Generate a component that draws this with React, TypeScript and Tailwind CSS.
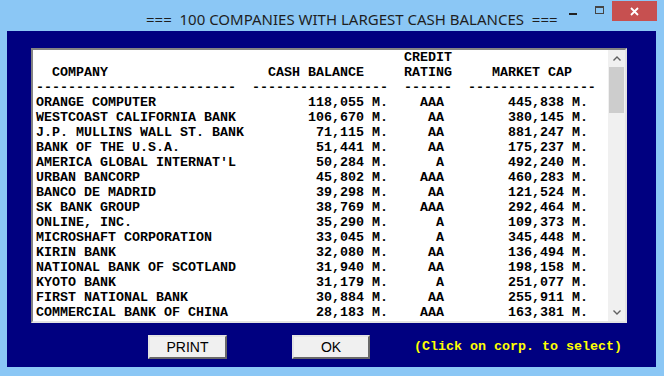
import React from 'react';

interface Company {
  name: string;
  cash: string;
  rating: string;
  cap: string;
}

const companies: Company[] = [
  { name: 'ORANGE COMPUTER', cash: '118,055', rating: 'AAA', cap: '445,838' },
  { name: 'WESTCOAST CALIFORNIA BANK', cash: '106,670', rating: 'AA', cap: '380,145' },
  { name: 'J.P. MULLINS WALL ST. BANK', cash: '71,115', rating: 'AA', cap: '881,247' },
  { name: 'BANK OF THE U.S.A.', cash: '51,441', rating: 'AA', cap: '175,237' },
  { name: "AMERICA GLOBAL INTERNAT'L", cash: '50,284', rating: 'A', cap: '492,240' },
  { name: 'URBAN BANCORP', cash: '45,802', rating: 'AAA', cap: '460,283' },
  { name: 'BANCO DE MADRID', cash: '39,298', rating: 'AA', cap: '121,524' },
  { name: 'SK BANK GROUP', cash: '38,769', rating: 'AAA', cap: '292,464' },
  { name: 'ONLINE, INC.', cash: '35,290', rating: 'A', cap: '109,373' },
  { name: 'MICROSHAFT CORPORATION', cash: '33,045', rating: 'A', cap: '345,448' },
  { name: 'KIRIN BANK', cash: '32,080', rating: 'AA', cap: '136,494' },
  { name: 'NATIONAL BANK OF SCOTLAND', cash: '31,940', rating: 'AA', cap: '198,158' },
  { name: 'KYOTO BANK', cash: '31,179', rating: 'A', cap: '251,077' },
  { name: 'FIRST NATIONAL BANK', cash: '30,884', rating: 'AA', cap: '255,911' },
  { name: 'COMMERCIAL BANK OF CHINA', cash: '28,183', rating: 'AAA', cap: '163,381' },
];

// fixed-width columns, same as the old text screen
const headerLines = [
  ' '.repeat(46) + 'CREDIT',
  '  COMPANY'.padEnd(29) + 'CASH BALANCE'.padEnd(17) + 'RATING'.padEnd(11) + 'MARKET CAP',
  '-'.repeat(25) + '  ' + '-'.repeat(17) + '  ' + '-'.repeat(6) + '  ' + '-'.repeat(16),
];

const formatRow = (c: Company) =>
  c.name.padEnd(34) +
  (c.cash + ' M.').padStart(10) +
  '    ' +
  c.rating.padStart(3) +
  ' '.repeat(8) +
  (c.cap + ' M.').padStart(10);

function Chevron({ down }: { down?: boolean }) {
  return (
    <svg width="8" height="5" viewBox="0 0 8 5" className={down ? 'rotate-180' : ''}>
      <path d="M0.5 4.5 L4 1 L7.5 4.5" fill="none" stroke="#606060" strokeWidth="1.4" />
    </svg>
  );
}

function Button({ label, width }: { label: string; width: string }) {
  return (
    <button
      className={`${width} h-[24px] bg-[#f0f0f0] border-2 border-t-[#e3e3e3] border-l-[#e3e3e3] border-r-[#696969] border-b-[#696969] text-[14px] text-black font-['Liberation_Sans',sans-serif] leading-none flex items-center justify-center`}
    >
      {label}
    </button>
  );
}

export default function App() {
  return (
    <div className="w-[664px] h-[376px] bg-[#8bc7f5] flex flex-col overflow-hidden">
      {/* title bar */}
      <div className="h-[31px] flex items-start">
        <div className="pl-[146px] pt-[9px] text-[15px] leading-[20px] text-[#1e1e1e] font-['Noto_Sans',sans-serif] whitespace-pre">
          ===  100 COMPANIES WITH LARGEST CASH BALANCES  ===
        </div>
        <div className="ml-auto flex items-start pr-[7px]">
          <div className="w-[26px] h-[21px] flex items-center justify-center">
            <div className="w-[8px] h-[2px] bg-[#222] mt-[6px]" />
          </div>
          <div className="w-[26px] h-[21px] flex items-center justify-center">
            <div className="w-[9px] h-[8px] border border-[#444] border-t-2 -mt-[2px]" />
          </div>
          <div className="w-[45px] h-[20px] mt-px bg-[#c75050] flex items-center justify-center">
            <svg width="9" height="9" viewBox="0 0 9 9">
              <path d="M1 1 L8 8 M8 1 L1 8" stroke="white" strokeWidth="1.8" />
            </svg>
          </div>
        </div>
      </div>

      {/* client area */}
      <div className="ml-[7px] mr-[8px] mb-[9px] flex-1 bg-[#000080] flex flex-col pl-[24px] pt-[17px]">
        <div className="w-[596px] h-[275px] bg-white border-2 border-t-[#838383] border-l-[#838383] border-r-[#e3e3e3] border-b-[#e3e3e3] flex">
          <div className="flex-1 overflow-hidden pl-[3px] font-['Liberation_Mono',monospace] font-bold text-[13.333px] leading-[15px] text-black whitespace-pre">
            {headerLines.map((line, i) => (
              <div key={i}>{line}</div>
            ))}
            {companies.map((c) => (
              <div key={c.name}>{formatRow(c)}</div>
            ))}
          </div>
          <div className="w-[17px] bg-[#f0f0f0] flex flex-col">
            <div className="h-[17px] flex items-center justify-center">
              <Chevron />
            </div>
            <div className="h-[46px] mx-px bg-[#cdcdcd]" />
            <div className="flex-1" />
            <div className="h-[17px] flex items-center justify-center">
              <Chevron down />
            </div>
          </div>
        </div>

        <div className="mt-[12px] flex items-center">
          <div className="ml-[117px]">
            <Button label="PRINT" width="w-[79px]" />
          </div>
          <div className="ml-[65px]">
            <Button label="OK" width="w-[78px]" />
          </div>
          <span className="ml-[44px] font-['Liberation_Mono',monospace] font-bold text-[13.333px] text-[#ffff00] whitespace-pre">
            (Click on corp. to select)
          </span>
        </div>
      </div>
    </div>
  );
}
